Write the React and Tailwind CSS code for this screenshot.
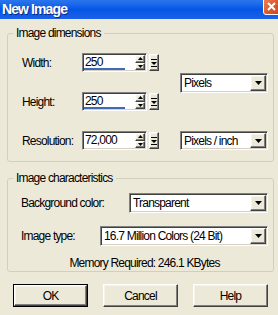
import React from 'react';

const raised =
  'bg-[#ece9d8] border border-t-white border-l-white border-r-[#404040] border-b-[#404040] shadow-[inset_-1px_-1px_0_#808080,inset_1px_1px_0_#f4f3ec]';
const sunken =
  'bg-white border border-t-[#808080] border-l-[#808080] border-r-white border-b-white shadow-[inset_1px_1px_0_#404040,inset_-1px_-1px_0_#d4d0c8]';

function Tri({ up }) {
  return (
    <svg width="5" height="3" viewBox="0 0 5 3">
      <path d={up ? 'M2.5 0 L5 3 L0 3 Z' : 'M0 0 L5 0 L2.5 3 Z'} fill="#000" />
    </svg>
  );
}

function NumberBox({ value, bar }) {
  return (
    <div className="flex items-center">
      <div className={`relative flex w-[65px] h-[19px] ${sunken}`}>
        <span className="flex-1 pl-[2px] pt-[1px] leading-[14px]">{value}</span>
        <div className="flex flex-col my-[1px] mr-[1px]">
          <div className={`w-[10px] flex-1 flex items-center justify-center ${raised}`}>
            <Tri up />
          </div>
          <div className={`w-[10px] flex-1 flex items-center justify-center ${raised}`}>
            <Tri />
          </div>
        </div>
        {bar && <div className="absolute left-[1px] bottom-[1px] h-[2px] w-[41px] bg-[#4169b4]" />}
      </div>
      <div className={`ml-[2px] w-[10px] h-[17px] flex items-center justify-center ${raised}`}>
        <svg width="6" height="8" viewBox="0 0 6 8">
          <path d="M0 0.5 H6" stroke="#000" strokeWidth="1" />
          <path d="M0 3 H6 L3 6 Z" fill="#000" />
          <path d="M0 7.5 H6" stroke="#000" strokeWidth="1" />
        </svg>
      </div>
    </div>
  );
}

function Combo({ value, width, height = 'h-[20px]' }) {
  return (
    <div className={`flex ${width} ${height} ${sunken}`}>
      <span className="flex-1 pl-[3px] pt-[2px] leading-[14px] whitespace-nowrap overflow-hidden">{value}</span>
      <div className={`w-[16px] my-[1px] mr-[1px] flex items-center justify-center ${raised}`}>
        <svg width="7" height="4" viewBox="0 0 7 4">
          <path d="M0 0 H7 L3.5 4 Z" fill="#000" />
        </svg>
      </div>
    </div>
  );
}

function Row({ label, value, bar }) {
  return (
    <div className="flex items-center h-[19px]">
      <span className="w-[60px]">{label}</span>
      <NumberBox value={value} bar={bar} />
    </div>
  );
}

export default function App() {
  return (
    <div className="w-[278px] h-[315px] bg-[#ece9d8] overflow-hidden font-['Liberation_Sans',Arial,sans-serif] text-[12px] tracking-[-0.8px] text-black">
      <div className="flex justify-between items-start h-[19px] overflow-hidden bg-gradient-to-b from-[#2a76ee] via-[#0556e6] to-[#1a60e8]">
        <span className="pl-[2px] pt-[1px] text-white font-bold text-[14px] tracking-[-0.9px] leading-[16px] [text-shadow:1px_1px_0_#0a2a80]">
          New Image
        </span>
        <div className="-mt-[6px] -mr-[6px] w-[21px] h-[21px] shrink-0 rounded-[3px] border border-white bg-gradient-to-br from-[#f08a62] via-[#e05a2c] to-[#c84018] flex items-center justify-center pt-[4px] pr-[4px]">
          <svg width="9" height="9" viewBox="0 0 9 9">
            <path d="M1 1 L8 8 M8 1 L1 8" stroke="#fff" strokeWidth="2" />
          </svg>
        </div>
      </div>

      <fieldset className="ml-[7px] mt-[7px] w-[267px] border border-[#d0d0bf] rounded-[3px] pb-[11px]">
        <legend className="ml-[5px] px-[3px] leading-[14px]">Image dimensions</legend>
        <div className="flex pt-[13px] pl-[14px] pr-[5px]">
          <div className="flex flex-col gap-[20px]">
            <Row label="Width:" value="250" bar />
            <Row label="Height:" value="250" bar />
            <Row label="Resolution:" value="72,000" />
          </div>
          <div className="ml-auto flex flex-col">
            <div className="mt-[20px]">
              <Combo value="Pixels" width="w-[88px]" />
            </div>
            <div className="mt-[38px]">
              <Combo value="Pixels / inch" width="w-[88px]" height="h-[19px]" />
            </div>
          </div>
        </div>
      </fieldset>

      <fieldset className="ml-[7px] mt-[9px] w-[267px] border border-[#d0d0bf] rounded-[3px] pb-[1px]">
        <legend className="ml-[5px] px-[3px] leading-[14px]">Image characteristics</legend>
        <div className="flex flex-col pt-[8px] pl-[13px] pr-[5px]">
          <div className="flex items-center justify-between">
            <span>Background color:</span>
            <Combo value="Transparent" width="w-[139px]" />
          </div>
          <div className="flex items-center justify-between mt-[13px]">
            <span>Image type:</span>
            <Combo value="16.7 Million Colors (24 Bit)" width="w-[168px]" />
          </div>
          <div className="mt-[10px] text-center leading-[14px]">Memory Required: 246.1 KBytes</div>
        </div>
      </fieldset>

      <div className="flex gap-[15px] pl-[13px] mt-[12px]">
        <div className="w-[75px] h-[23px] border border-black">
          <div className={`w-full h-full flex items-center justify-center ${raised}`}>OK</div>
        </div>
        <div className={`w-[75px] h-[23px] flex items-center justify-center ${raised}`}>Cancel</div>
        <div className={`w-[75px] h-[23px] flex items-center justify-center ${raised}`}>Help</div>
      </div>
    </div>
  );
}
